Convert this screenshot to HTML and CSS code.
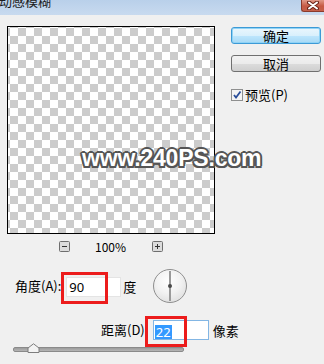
FILE: index.html
```html
<!DOCTYPE html>
<html lang="zh-CN">
<head>
<meta charset="utf-8">
<link rel="stylesheet" href="styles.css">
</head>
<body>
<div class="dialog">
  <div class="titlebar">
    <span class="title">动感模糊</span>
    <span class="close"><svg width="12" height="9" viewBox="0 0 12 9"><path d="M2 1.5 L10 7.5 M10 1.5 L2 7.5" stroke="#6b2418" stroke-width="4" stroke-linecap="round"/><path d="M2 1.5 L10 7.5 M10 1.5 L2 7.5" stroke="#fff" stroke-width="2" stroke-linecap="round"/></svg></span>
  </div>
  <div class="top">
    <div class="leftcol">
      <div class="preview"></div>
      <div class="zoomrow">
        <span class="zbtn"><svg width="11" height="11" viewBox="0 0 11 11"><rect x="0.5" y="0.5" width="10" height="10" rx="1" fill="#dcdcdc" stroke="#6e6e6e"/><path d="M3 5.5 H8" stroke="#333" stroke-width="1"/></svg></span>
        <span class="zoomval">100%</span>
        <span class="zbtn"><svg width="11" height="11" viewBox="0 0 11 11"><rect x="0.5" y="0.5" width="10" height="10" rx="1" fill="#dcdcdc" stroke="#6e6e6e"/><path d="M3 5.5 H8 M5.5 3 V8" stroke="#333" stroke-width="1"/></svg></span>
      </div>
    </div>
    <div class="rightcol">
      <div class="btn btn-default">确定</div>
      <div class="btn">取消</div>
      <div class="check">
        <span class="box"><svg width="12" height="12" viewBox="0 0 12 12"><rect x="0.5" y="0.5" width="11" height="11" fill="#f4f4f4" stroke="#8e8f8f"/><path d="M3 6 L5 8.5 L9.5 2.5" fill="none" stroke="#2a4e9a" stroke-width="1.8"/></svg></span>
        <span class="checklabel">预览(P)</span>
      </div>
    </div>
  </div>
  <div class="angle-row">
    <span class="label">角度(A):</span>
    <span class="field field-angle"><span class="val">90</span><span class="mark mark-angle"></span></span>
    <span class="unit">度</span>
    <span class="dial"><span class="needle"></span><span class="hub"></span></span>
  </div>
  <div class="dist-row">
    <span class="label">距离(D)</span>
    <span class="field field-dist"><span class="sel">22</span><span class="mark mark-dist"></span></span>
    <span class="unit2">像素</span>
  </div>
  <div class="slider">
    <div class="track"></div>
    <svg class="thumb" width="13" height="10" viewBox="0 0 13 10"><path d="M1 9.5 V5 L6.5 0.8 L12 5 V9.5 Z" fill="#f3f3f3" stroke="#7d7d7d"/></svg>
  </div>
  <div class="watermark">www.240PS.com</div>
</div>
</body>
</html>
```
FILE: styles.css
```css
html, body {
  margin: 0;
  padding: 0;
}
body {
  width: 324px;
  height: 364px;
  overflow: hidden;
  background: #f0f0f0;
  font-family: "Noto Sans CJK SC", "Noto Sans", sans-serif;
  font-size: 13px;
  color: #000;
}
.dialog {
  position: relative;
  width: 324px;
  height: 364px;
}
.titlebar {
  height: 15px;
  display: flex;
  align-items: flex-start;
  background: linear-gradient(#b9d0ea, #c8daef);
  overflow: hidden;
}
.title {
  display: block;
  margin-top: -7px;
  margin-left: -1px;
  font-size: 13px;
  line-height: 16px;
  color: #1b1b1b;
}
.close {
  margin-left: auto;
  width: 23px;
  height: 12px;
  box-sizing: border-box;
  border: 1px solid #8c3b2c;
  border-top: none;
  border-right: none;
  border-bottom-left-radius: 3px;
  background: linear-gradient(#e09a88, #c65a44 55%, #c4604a);
  display: flex;
  align-items: center;
  justify-content: center;
}
.close svg { display: block; }
.top {
  display: flex;
  margin-top: 11px;
}
.leftcol {
  padding-left: 7px;
  width: 208px;
}
.preview {
  width: 206px;
  height: 206px;
  border: 1px solid #000;
  background-color: #fff;
  background-image: repeating-conic-gradient(#cccccc 0 25%, #ffffff 0 50%);
  background-size: 16px 16px;
  background-position: 2px 1px;
}
.zoomrow {
  display: flex;
  justify-content: center;
  align-items: center;
  margin-top: 7px;
  height: 11px;
}
.zbtn { display: block; height: 11px; }
.zbtn svg { display: block; }
.zoomval {
  margin: 0 26px 0 25px;
  font-size: 12px;
  line-height: 11px;
}
.rightcol {
  margin-left: 16px;
  padding-top: 1px;
}
.btn {
  width: 90px;
  height: 17px;
  box-sizing: border-box;
  border: 1px solid #707070;
  border-radius: 3px;
  background: linear-gradient(#f2f2f2 0, #ebebeb 50%, #dcdcdc 51%, #cfcfcf 100%);
  text-align: center;
  font-size: 13px;
  line-height: 15px;
  margin-bottom: 11px;
}
.btn-default {
  border-color: #3c9ad6;
  box-shadow: inset 0 0 0 1px #8fd3f6;
  background: linear-gradient(#eaf6fd 0, #d9f0fc 50%, #bee6fd 51%, #a7d9f5 100%);
}
.check {
  display: flex;
  align-items: center;
  margin-top: 16px;
  height: 13px;
}
.box { display: block; height: 12px; }
.box svg { display: block; }
.checklabel {
  margin-left: 2px;
  font-size: 13px;
  line-height: 13px;
}
.angle-row {
  display: flex;
  align-items: center;
  height: 34px;
  margin-top: 17px;
  padding-left: 15px;
}
.label {
  font-size: 13px;
  line-height: 16px;
}
.field {
  position: relative;
  display: block;
  height: 20px;
  box-sizing: border-box;
  background: #fff;
  font-family: "Noto Sans", sans-serif;
  font-size: 13px;
  line-height: 18px;
}
.field-angle {
  width: 55px;
  margin-left: 5px;
  border: 1px solid #e4e4e4;
  padding-left: 2px;
  margin-top: 2px;
}
.unit {
  width: 13px;
  margin-left: 2px;
  font-size: 13px;
}
.dial {
  position: relative;
  display: block;
  width: 34px;
  height: 34px;
  box-sizing: border-box;
  margin-left: 17px;
  border: 1px solid #8e8e8e;
  border-radius: 50%;
  background: radial-gradient(circle at 45% 35%, #ffffff 0, #f2f2f2 45%, #d6d6d6 100%);
}
.needle {
  position: absolute;
  left: 15px;
  top: 1px;
  width: 2px;
  height: 30px;
  background: #9a9a9a;
}
.hub {
  position: absolute;
  left: 14px;
  top: 14px;
  width: 4px;
  height: 4px;
  border-radius: 50%;
  background: #4a4a4a;
}
.dist-row {
  display: flex;
  align-items: center;
  height: 20px;
  margin-top: 17px;
  padding-left: 101px;
}
.field-dist {
  width: 56px;
  margin-left: 8px;
  border: 1px solid #83b6e4;
  padding-left: 1px;
  padding-top: 2px;
}
.sel {
  display: inline-block;
  background: #3399ff;
  color: #fff;
  height: 14px;
  line-height: 14px;
  padding: 0 1px;
}
.unit2 {
  margin-left: 4px;
  font-size: 13px;
}
.mark {
  position: absolute;
  box-sizing: border-box;
  border: 3px solid #ec1c1c;
}
.mark-angle {
  left: -6px;
  top: -6px;
  width: 47px;
  height: 32px;
}
.mark-dist {
  left: -9px;
  top: -5px;
  width: 42px;
  height: 31px;
}
.slider {
  position: relative;
  margin-top: 3px;
  margin-left: 13px;
  width: 171px;
  height: 9px;
  display: flex;
  align-items: flex-end;
}
.track {
  width: 171px;
  height: 5px;
  box-sizing: border-box;
  border: 1px solid #8a8a8a;
  border-radius: 2px;
  background: linear-gradient(#9c9c9c, #b5b5b5);
}
.thumb {
  position: absolute;
  left: 14px;
  top: 0;
}
.watermark {
  position: absolute;
  left: 82px;
  top: 147px;
  font-family: "Liberation Sans", Arial, sans-serif;
  font-weight: bold;
  font-size: 23px;
  line-height: 23px;
  letter-spacing: -0.2px;
  color: #fff;
  white-space: nowrap;
  text-shadow:
    2px 0 #555, -2px 0 #555, 0 2px #555, 0 -2px #555,
    1.5px 1.5px #555, -1.5px 1.5px #555, 1.5px -1.5px #555, -1.5px -1.5px #555,
    0 0 3px #888;
}
```
